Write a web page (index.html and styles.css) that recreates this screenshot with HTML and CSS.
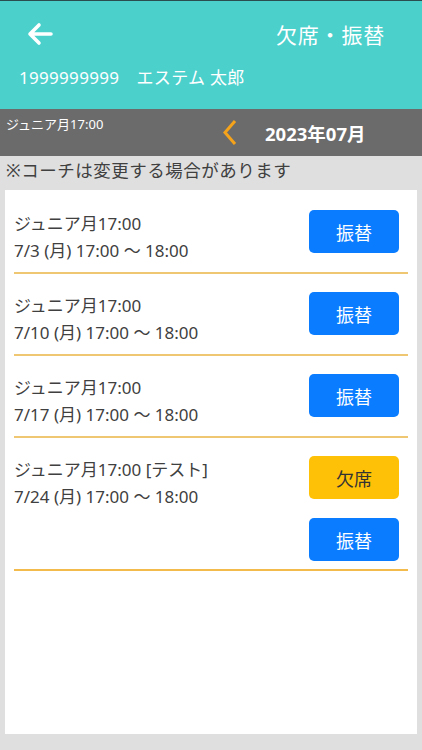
FILE: index.html
```html
<!DOCTYPE html>
<html lang="ja">
<head>
  <meta charset="UTF-8">
  <meta name="viewport" content="width=device-width, initial-scale=1.0">
  <title>欠席・振替</title>
  <link rel="stylesheet" href="styles.css">
</head>
<body>
  <div class="header">
    <div class="header-top">
      <a href="#" class="back">
        <svg width="26" height="24" viewBox="0 0 26 24">
          <path d="M24 12H3M12 3L3 12L12 21" fill="none" stroke="#fff" stroke-width="3.6" stroke-linecap="round" stroke-linejoin="round"/>
        </svg>
      </a>
      <h1>欠席・振替</h1>
    </div>
    <div class="user">1999999999　エステム 太郎</div>
  </div>

  <div class="month-bar">
    <div class="class-name">ジュニア月17:00</div>
    <a href="#" class="prev">
      <svg width="16" height="27" viewBox="0 0 16 27">
        <path d="M13 2L3 13.5L13 25" fill="none" stroke="#f5a31a" stroke-width="3"/>
      </svg>
    </a>
    <div class="month">2023年07月</div>
  </div>

  <div class="notice">※コーチは変更する場合があります</div>

  <div class="card">
    <div class="lesson">
      <div class="lesson-info">
        <div>ジュニア月17:00</div>
        <div>7/3 (月) 17:00 〜 18:00</div>
      </div>
      <div class="lesson-actions">
        <button class="btn btn-transfer">振替</button>
      </div>
    </div>
    <div class="lesson">
      <div class="lesson-info">
        <div>ジュニア月17:00</div>
        <div>7/10 (月) 17:00 〜 18:00</div>
      </div>
      <div class="lesson-actions">
        <button class="btn btn-transfer">振替</button>
      </div>
    </div>
    <div class="lesson">
      <div class="lesson-info">
        <div>ジュニア月17:00</div>
        <div>7/17 (月) 17:00 〜 18:00</div>
      </div>
      <div class="lesson-actions">
        <button class="btn btn-transfer">振替</button>
      </div>
    </div>
    <div class="lesson">
      <div class="lesson-info">
        <div>ジュニア月17:00 [テスト]</div>
        <div>7/24 (月) 17:00 〜 18:00</div>
      </div>
      <div class="lesson-actions">
        <button class="btn btn-absent">欠席</button>
        <button class="btn btn-transfer">振替</button>
      </div>
    </div>
  </div>
</body>
</html>
```

FILE: styles.css
```css
* {
  margin: 0;
  padding: 0;
  box-sizing: border-box;
}

body {
  width: 422px;
  height: 750px;
  overflow: hidden;
  font-family: "Noto Sans", "Noto Sans CJK JP", sans-serif;
  background: #dfdfdf;
  color: #404040;
}

.header {
  background: #4bd0cc;
  border-top: 1px solid #2b4d50;
  height: 109px;
  color: white;
}

.header-top {
  display: flex;
  align-items: center;
  justify-content: space-between;
  height: 66px;
  padding: 0 37px 0 27px;
}

.back {
  display: flex;
  margin-top: -1px;
}

.header h1 {
  font-size: 21px;
  font-weight: 400;
  letter-spacing: 0.8px;
}

.user {
  font-size: 17px;
  line-height: 22px;
  padding-left: 19px;
  letter-spacing: 0.3px;
}

.month-bar {
  display: flex;
  align-items: center;
  height: 47px;
  background: #6b6b6b;
  color: white;
}

.class-name {
  flex: 0 0 222px;
  align-self: flex-start;
  padding: 7px 0 0 6px;
  font-size: 13px;
  line-height: 17px;
}

.prev {
  display: flex;
  margin-right: 27px;
}

.month {
  font-size: 18.5px;
  font-weight: 700;
}

.notice {
  padding-left: 6px;
  font-size: 17.5px;
  line-height: 28px;
  letter-spacing: 0.5px;
}

.card {
  height: 544px;
  margin: 6px 5px 0;
  padding-top: 2px;
  background: white;
}

.lesson {
  display: flex;
  justify-content: space-between;
  align-items: flex-start;
  margin: 0 9px;
  padding: 18px 9px 8px 0;
  border-bottom: 2px solid #efc772;
}

.lesson:last-child {
  border-bottom-color: #f2bb4c;
}

.lesson-info {
  font-size: 17px;
  line-height: 27px;
}

.lesson-actions {
  display: flex;
  flex-direction: column;
  gap: 19px;
}

.btn {
  width: 90px;
  height: 43px;
  border: none;
  border-radius: 5px;
  font-family: inherit;
  font-size: 18px;
  cursor: pointer;
}

.btn-transfer {
  background: #0a7cff;
  color: white;
}

.btn-absent {
  background: #ffc107;
  color: #333;
}
```
